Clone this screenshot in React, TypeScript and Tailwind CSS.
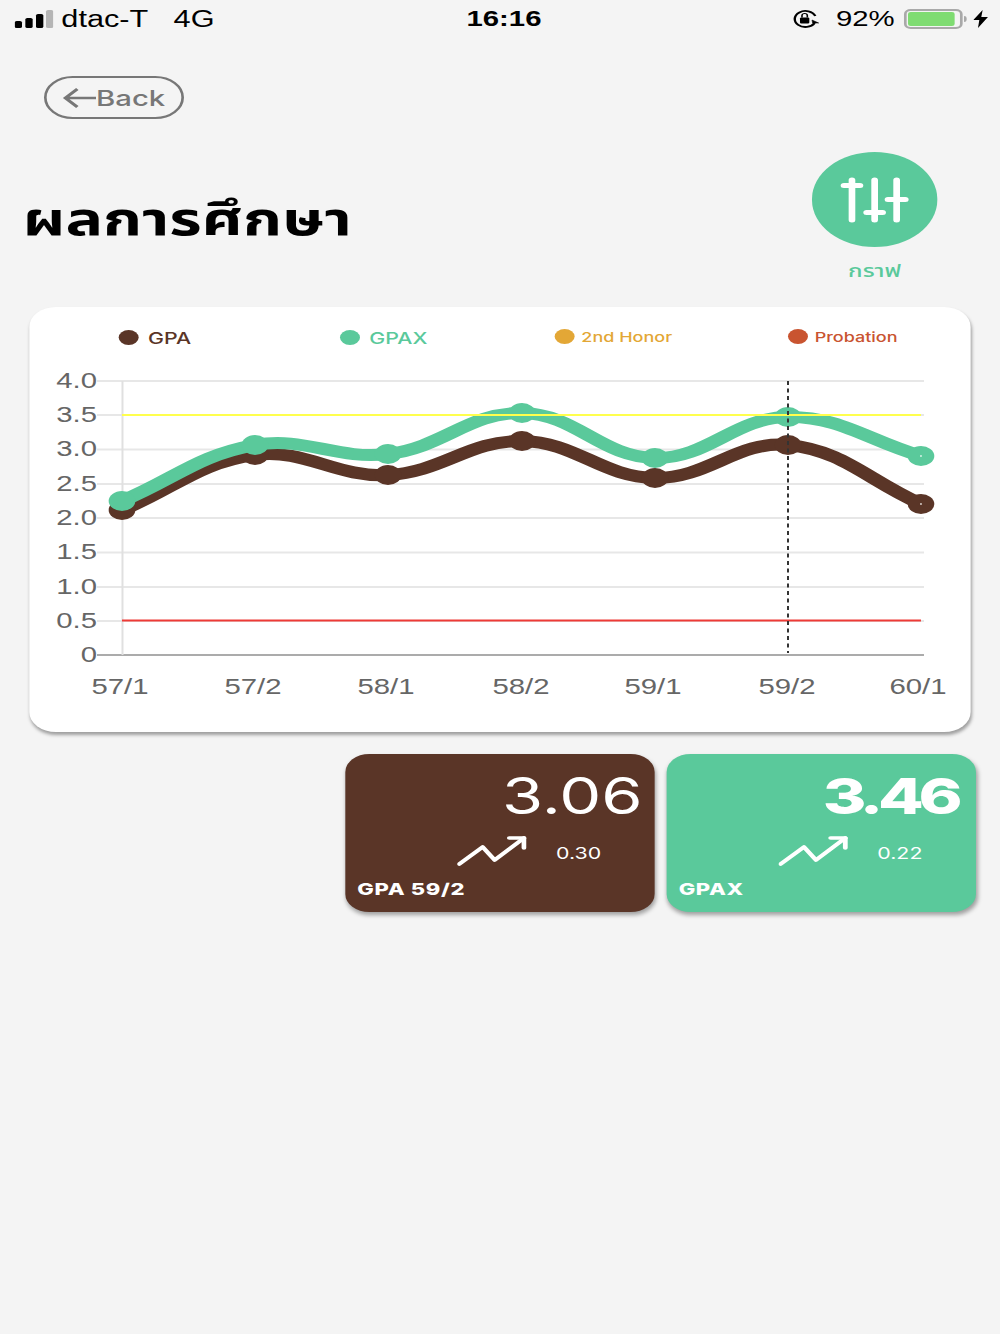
import React from "react";

const GPA: [number, number][] = [[122, 510], [255, 455], [388, 475], [522, 441], [655, 478], [788, 445], [921, 504]];
const GPAX: [number, number][] = [[122, 501], [255, 445], [388, 454], [522, 413], [655, 458], [788, 417], [921, 456]];
const TERMS: [string, number][] = [["57/1", 120], ["57/2", 253], ["58/1", 386], ["58/2", 521], ["59/1", 653], ["59/2", 787], ["60/1", 918]];
const TICKS: [string, number][] = [["4.0", 381], ["3.5", 415], ["3.0", 449.5], ["2.5", 484], ["2.0", 518], ["1.5", 552.5], ["1.0", 587], ["0.5", 621], ["0", 655]];

// Chart coordinates are kept in screen pixels and converted to the narrower layout width.
const sx = (x: number) => x * 0.75 - 22;
const sy = (y: number) => y - 360;

function spline(points: [number, number][], tension = 0.4) {
  const pts = points.map(([x, y]) => [sx(x), sy(y)]);
  const controls = pts.map((cur, i) => {
    const prev = pts[i - 1] ?? cur;
    const next = pts[i + 1] ?? cur;
    const d01 = Math.hypot(cur[0] - prev[0], cur[1] - prev[1]);
    const d12 = Math.hypot(next[0] - cur[0], next[1] - cur[1]);
    const total = d01 + d12 || 1;
    const fa = (tension * d01) / total;
    const fb = (tension * d12) / total;
    return {
      before: [cur[0] - fa * (next[0] - prev[0]), cur[1] - fa * (next[1] - prev[1])],
      after: [cur[0] + fb * (next[0] - prev[0]), cur[1] + fb * (next[1] - prev[1])],
    };
  });
  let d = `M${pts[0][0]} ${pts[0][1]}`;
  for (let i = 1; i < pts.length; i++) {
    const a = controls[i - 1].after;
    const b = controls[i].before;
    d += ` C${a[0]} ${a[1]} ${b[0]} ${b[1]} ${pts[i][0]} ${pts[i][1]}`;
  }
  return d;
}

function Series({ points, color }: { points: [number, number][]; color: string }) {
  return (
    <g>
      <path d={spline(points)} fill="none" stroke={color} strokeWidth={12} />
      {points.map(([x, y]) => (
        <circle key={x} cx={sx(x)} cy={sy(y)} r={10} fill={color} />
      ))}
      <circle cx={sx(points[6][0])} cy={sy(points[6][1])} r={0.8} fill="#ffffff" />
    </g>
  );
}

function Chart() {
  return (
    <svg width={706} height={345} viewBox="0 0 706 345" className="block" fontFamily="'Liberation Sans', sans-serif">
      {TICKS.map(([label, y]) => (
        <g key={label}>
          <line x1={sx(97)} x2={sx(924)} y1={sy(y)} y2={sy(y)} stroke={label === "0" ? "#ababab" : "#e7e7e7"} strokeWidth={2} />
          <text x={sx(97)} y={sy(y) + 7} textAnchor="end" fontSize={22} fill="#666666">{label}</text>
        </g>
      ))}
      <line x1={sx(122.5)} x2={sx(122.5)} y1={sy(381)} y2={sy(655)} stroke="#e0e0e0" strokeWidth={1.5} />
      <Series points={GPA} color="#5a3527" />
      <Series points={GPAX} color="#5ac99b" />
      <line x1={sx(122)} x2={sx(921)} y1={sy(415)} y2={sy(415)} stroke="#ffff4d" strokeWidth={2} />
      <line x1={sx(122)} x2={sx(921)} y1={sy(620.5)} y2={sy(620.5)} stroke="#ee3a36" strokeWidth={2} />
      <line x1={sx(788)} x2={sx(788)} y1={sy(381)} y2={sy(653)} stroke="#333333" strokeWidth={1.5} strokeDasharray="4 3.5" />
      {TERMS.map(([label, x]) => (
        <text key={label} x={sx(x)} y={sy(694)} textAnchor="middle" fontSize={22} fill="#666666">{label}</text>
      ))}
    </svg>
  );
}

function TrendArrow() {
  return (
    <svg width={52} height={32} viewBox="0 0 52 32" fill="none" stroke="#ffffff" strokeWidth={3.6} strokeLinecap="round" strokeLinejoin="round">
      <path d="M1.5 29 L19 12 L28 25 L50 3" />
      <path d="M39 3 H50 V13" />
    </svg>
  );
}

function StatCard({ value, delta, label, bg, valueClass }: { value: string; delta: string; label: string; bg: string; valueClass: string }) {
  return (
    <div className={`flex h-[158px] w-[232px] flex-col rounded-[18px] ${bg} pt-[18px] text-white shadow-[1px_3px_4px_rgba(0,0,0,0.35)]`}>
      <div className={`text-right text-[50px] leading-[48px] ${valueClass}`}>{value}</div>
      <div className="mt-[15px] flex h-[32px] items-center pl-[84px]">
        <TrendArrow />
        <span className="mt-[3px] ml-[22px] text-[16px] font-normal">{delta}</span>
      </div>
      <div className="mt-[12px] pl-[9px] text-[16.5px] leading-[20px] font-extrabold tracking-[0.5px]">{label}</div>
    </div>
  );
}

function LegendItem({ label, dot, text, size, raised }: { label: string; dot: string; text: string; size: string; raised?: boolean }) {
  return (
    <div className={`flex items-center ${raised ? "gap-[5px]" : "gap-[7px]"}`}>
      <span className={`h-[15px] w-[15px] rounded-full ${dot} ${raised ? "-mt-[3px]" : "-mt-[1px]"}`} />
      <span className={`font-medium ${size} ${text}`}>{label}</span>
    </div>
  );
}

function SliderIcon() {
  return (
    <svg width={52} height={50} viewBox="0 0 52 50" fill="none" stroke="#ffffff" strokeLinecap="round">
      <path d="M9 5 V45 M26 5 V45 M42.5 5 V45" strokeWidth={5} />
      <path d="M3 10.5 H15 M20 37.5 H32 M36 24.5 H49" strokeWidth={5} />
    </svg>
  );
}

function StatusBar() {
  return (
    <div className="grid h-[38px] grid-cols-[1fr_auto_1fr] items-center text-black" style={{ fontFamily: "'Liberation Sans', sans-serif" }}>
      <div className="flex items-center pl-[11px]">
        <svg width={29} height={18} viewBox="0 0 29 18" className="mr-[6px]">
          <rect x="0" y="11" width="5.5" height="7" rx="1.5" fill="#000" />
          <rect x="8" y="8" width="5.5" height="10" rx="1.5" fill="#000" />
          <rect x="16" y="4" width="5.5" height="14" rx="1.5" fill="#000" />
          <rect x="23.5" y="0" width="5.5" height="18" rx="1.5" fill="#b5b5b5" />
        </svg>
        <span className="text-[23px] leading-none">dtac-T</span>
        <span className="ml-[19px] text-[23px] leading-none">4G</span>
      </div>
      <div className="pl-[6px] text-[22px] leading-none font-bold">16:16</div>
      <div className="flex items-center justify-end pr-[9px]">
        <svg width={21} height={20} viewBox="0 0 21 20" fill="none" stroke="#000" strokeWidth={1.8}>
          <path d="M17 14 A8 8 0 1 1 17.5 7" />
          <path d="M15 8 L19.5 8 L20 11 Z" fill="#000" strokeWidth={0.5} transform="rotate(180 17.5 11)" />
          <rect x="6" y="8.5" width="7" height="6" rx="1" fill="#000" stroke="none" />
          <path d="M7.5 8.5 V6.5 A2 2 0 0 1 11.5 6.5 V8.5" strokeWidth={1.2} />
        </svg>
        <span className="ml-[12px] text-[22px] leading-none">92%</span>
        <div className="ml-[7px] flex h-[20px] w-[44px] items-center rounded-[5px] border-2 border-[#a9a9a9] p-[1px]">
          <div className="h-full w-[92%] rounded-[2px] bg-[#7fdc72]" />
        </div>
        <div className="ml-[1px] h-[6px] w-[2px] rounded-r-full bg-[#a9a9a9]" />
        <svg width={11} height={18} viewBox="0 0 11 18" className="ml-[5px]">
          <path d="M7 0 L0 10 H4.5 L3.5 18 L11 7 H6 Z" fill="#000" />
        </svg>
      </div>
    </div>
  );
}

export default function App() {
  const bodyFont = { fontFamily: "Inter, 'Noto Sans', 'Noto Sans Thai', sans-serif" };
  return (
    <div className="h-[1334px] w-[1000px] overflow-hidden bg-[#f4f4f4]" style={bodyFont}>
      {/* The whole screen is laid out at 750 wide and stretched to the window width. */}
      <div className="h-[1334px] w-[750px] origin-top-left scale-x-[1.3333]">
        <StatusBar />

        <div className="mt-[38px] ml-[33px] flex h-[43px] w-[105px] items-center rounded-full border-2 border-[#777777] pl-[12px] text-[#777777]">
          <svg width={25} height={22} viewBox="0 0 25 22" fill="none" stroke="#777777" strokeWidth={2.6}>
            <path d="M25 11 H2 M11 2 L2 11 L11 20" />
          </svg>
          <span className="text-[22px] leading-none font-medium">Back</span>
        </div>

        <div className="mt-[33px] flex items-start justify-between pr-[47px] pl-[17px]">
          <h1 className="mt-[36px] text-[47px] leading-[60px] font-bold text-black">ผลการศึกษา</h1>
          <div className="flex flex-col items-center">
            <div className="flex h-[95px] w-[94px] items-center justify-center rounded-full bg-[#5ac99b]">
              <SliderIcon />
            </div>
            <span className="mt-[12px] text-[18px] leading-[24px] font-medium text-[#5ac99b]">กราฟ</span>
          </div>
        </div>

        <div className="mt-[24px] ml-[22px] h-[425px] w-[706px] rounded-[20px] bg-white shadow-[1px_3px_3px_rgba(0,0,0,0.35)]">
          <div className="grid h-[53px] grid-cols-[166px_161px_175px_auto] items-center pt-[8px] pl-[67px]">
            <LegendItem label="GPA" dot="bg-[#5a3527]" text="text-[#5a3527]" size="text-[16px]" />
            <LegendItem label="GPAX" dot="bg-[#5ac99b]" text="text-[#5ac99b]" size="text-[16px]" />
            <LegendItem label="2nd Honor" dot="bg-[#e3a736]" text="text-[#e3a736]" size="text-[13.5px]" raised />
            <LegendItem label="Probation" dot="bg-[#c95430]" text="text-[#c95430]" size="text-[13.5px]" raised />
          </div>
          <Chart />
        </div>

        <div className="mt-[22px] flex justify-end gap-[9px] pr-[18px]">
          <StatCard value="3.06" delta="0.30" label="GPA 59/2" bg="bg-[#5a3527]" valueClass="pr-[9px] font-normal" />
          <StatCard value="3.46" delta="0.22" label="GPAX" bg="bg-[#5ac99b]" valueClass="pr-[14px] font-extrabold tracking-[-4px]" />
        </div>
      </div>
    </div>
  );
}
